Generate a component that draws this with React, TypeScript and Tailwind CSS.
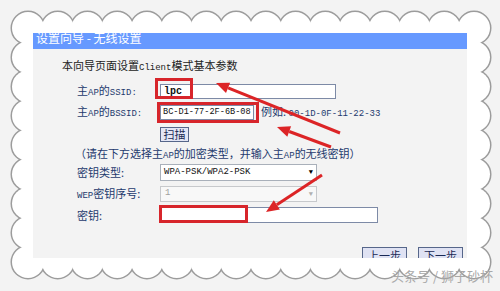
import React from 'react';

const cjk = { fontFamily: '"Noto Sans CJK SC", sans-serif' };
const mono = { fontFamily: '"Liberation Mono", "Noto Sans CJK SC", monospace' };

const Lat = ({ children }: { children: React.ReactNode }) => (
  <span className="text-[9px]" style={mono}>
    {children}
  </span>
);

// scalloped frame drawn as circles round the edge
const Scallops: React.FC = () => {
  const pts: [number, number][] = [];
  for (let i = 0; i < 16; i++) {
    const x = 28 + (446 / 15) * i;
    pts.push([x, 28], [x, 262]);
  }
  for (let i = 1; i < 8; i++) {
    const y = 28 + (234 / 8) * i;
    pts.push([28, y], [474, y]);
  }
  return (
    <svg className="absolute inset-0" width="500" height="291">
      {pts.map(([x, y], i) => (
        <circle key={'s' + i} cx={x} cy={y} r="16" fill="#fff" stroke="#9c9c9c" strokeWidth="3" />
      ))}
      {pts.map(([x, y], i) => (
        <circle key={'f' + i} cx={x} cy={y} r="16" fill="#fff" />
      ))}
      <rect x="28" y="28" width="446" height="234" fill="#fff" />
    </svg>
  );
};

const Arrow = ({ x1, y1, x2, y2 }: { x1: number; y1: number; x2: number; y2: number }) => {
  const a = Math.atan2(y2 - y1, x2 - x1);
  const L = 13;
  const W = 5.5;
  const bx = x2 - L * Math.cos(a);
  const by = y2 - L * Math.sin(a);
  const p1 = `${bx + W * Math.sin(a)},${by - W * Math.cos(a)}`;
  const p2 = `${bx - W * Math.sin(a)},${by + W * Math.cos(a)}`;
  return (
    <g>
      <line x1={x1} y1={y1} x2={bx} y2={by} stroke="#dc2426" strokeWidth="3" />
      <polygon points={`${x2},${y2} ${p1} ${p2}`} fill="#dc2426" />
    </g>
  );
};

const Row = ({ label, children, className }: { label: React.ReactNode; children: React.ReactNode; className: string }) => (
  <div className={`flex items-center pl-[44px] ${className}`}>
    <div className="w-[83px] text-[11px] leading-none text-[#1e3a6e] whitespace-nowrap" style={cjk}>
      {label}
    </div>
    {children}
  </div>
);

const App: React.FC = () => {
  return (
    <div className="relative w-[500px] h-[291px] overflow-hidden bg-[#f3f3f3]">
      <Scallops />
      <div className="relative pt-[33px] pl-[33px]">
        <div className="w-[434px] h-[225px] overflow-hidden bg-[#f3f3f3] flex flex-col">
          <div className="h-[16px] shrink-0 bg-[#6699ff] overflow-hidden pl-[3px]">
            <div className="-mt-[3px] text-[12px] leading-[16px] text-white" style={cjk}>
              设置向导 - 无线设置
            </div>
          </div>

          <div className="mt-[9px] pl-[29px] h-[14px] text-[11px] leading-[14px] text-[#222]" style={cjk}>
            本向导页面设置<Lat>Client</Lat>模式基本参数
          </div>

          <Row label={<>主<Lat>AP</Lat>的<Lat>SSID:</Lat></>} className="mt-[12px] h-[15px]">
            <div className="w-[176px] h-[15px] border border-[#7d8aa6] bg-white flex items-center pl-[3px] text-[10px] font-bold text-[#111]" style={mono}>
              lpc
            </div>
          </Row>

          <Row label={<>主<Lat>AP</Lat>的<Lat>BSSID:</Lat></>} className="mt-[6px] h-[15px]">
            <div className="w-[94px] h-[15px] border border-[#7d8aa6] bg-white flex items-center pl-[2px] overflow-hidden whitespace-nowrap text-[8.6px] text-[#111]" style={mono}>
              BC-D1-77-2F-6B-08
            </div>
            <div className="ml-[7px] text-[11px] leading-none text-[#1e3a6e] whitespace-nowrap" style={cjk}>
              例如: <Lat>00-1D-0F-11-22-33</Lat>
            </div>
          </Row>

          <Row label="" className="mt-[7px] h-[15px]">
            <div className="w-[29px] h-[15px] border border-[#56668a] bg-[#e3e6f5] flex items-center justify-center text-[11px] text-[#1a2a55]" style={cjk}>
              扫描
            </div>
          </Row>

          <div className="mt-[4px] pl-[42px] h-[14px] text-[11px] leading-[14px] text-[#1e3a6e] whitespace-nowrap" style={cjk}>
            （请在下方选择主<Lat>AP</Lat>的加密类型，并输入主<Lat>AP</Lat>的无线密钥）
          </div>

          <Row label="密钥类型:" className="mt-[4px] h-[17px]">
            <div className="w-[157px] h-[17px] border border-[#a9b0ba] bg-white flex items-center justify-between pl-[3px] pr-[3px] text-[9px] text-[#111]" style={mono}>
              <span>WPA-PSK/WPA2-PSK</span>
              <span className="text-[7px] text-black">▼</span>
            </div>
          </Row>

          <Row label={<><Lat>WEP</Lat>密钥序号:</>} className="mt-[5px] h-[16px]">
            <div className="w-[157px] h-[16px] border border-[#c7c9cc] bg-[#f8f8f8] flex items-center justify-between pl-[4px] pr-[3px] text-[9px] text-[#a0a0a0]" style={mono}>
              <span>1</span>
              <span className="text-[7px] text-[#b0b0b0]">▼</span>
            </div>
          </Row>

          <Row label="密钥:" className="mt-[5px] h-[16px]">
            <div className="w-[218px] h-[16px] border border-[#7d8aa6] bg-white" />
          </Row>

          <div className="mt-[20px] h-[1px] bg-[#f0b27c]" />

          <div className="mt-[4px] flex justify-end gap-[11px] pr-[4px]">
            <div className="w-[45px] h-[16px] border border-[#56668a] bg-[#dfe2f3] flex items-center justify-center text-[11px] text-[#1a2a55]" style={cjk}>
              上一步
            </div>
            <div className="w-[45px] h-[16px] border border-[#56668a] bg-[#dfe2f3] flex items-center justify-center text-[11px] text-[#1a2a55]" style={cjk}>
              下一步
            </div>
          </div>
        </div>
      </div>

      {/* annotations */}
      <svg className="absolute inset-0 pointer-events-none" width="500" height="291">
        <rect x="156.5" y="79.5" width="35" height="18" fill="none" stroke="#d7252b" strokeWidth="3" />
        <rect x="158.5" y="103.5" width="99" height="18" fill="none" stroke="#d7252b" strokeWidth="3" />
        <rect x="160.5" y="206.5" width="86" height="15" fill="none" stroke="#d7252b" strokeWidth="3" />
        <Arrow x1={340} y1={133} x2={216} y2={83} />
        <Arrow x1={331} y1={147} x2={277} y2={127} />
        <Arrow x1={322} y1={175} x2={266} y2={212} />
      </svg>

      <div className="absolute right-[7px] bottom-[9px] text-[13px] leading-none text-[#a9a9a9]" style={cjk}>
        头条号 / 狮子砂杯
      </div>
    </div>
  );
};

export default App;
